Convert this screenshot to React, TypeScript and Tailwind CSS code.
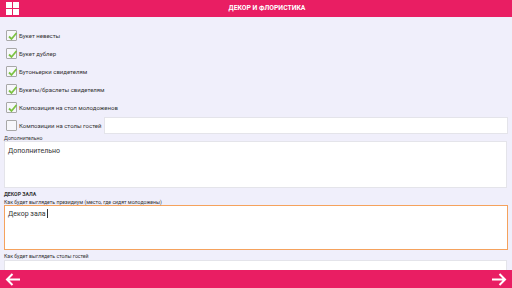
import React from "react";

const CHECKS = [
  { label: "Букет невесты", checked: true },
  { label: "Букет дублер", checked: true },
  { label: "Бутоньерки свидетелям", checked: true },
  { label: "Букеты/браслеты свидетелям", checked: true },
  { label: "Композиция на стол молодоженов", checked: true },
];

function Box({ checked }: { checked: boolean }) {
  return (
    <div className="relative w-[11px] h-[11px] border border-[#a8a8a8] rounded-[1px] bg-[#f7f7fb] shrink-0">
      {checked && (
        <svg viewBox="0 0 11 11" className="absolute left-0 top-0 w-[11px] h-[11px]">
          <path d="M2 5.5 L4.5 8 L9.5 2" fill="none" stroke="#7cc242" strokeWidth="1.8" />
        </svg>
      )}
    </div>
  );
}

function Arrow({ dir }: { dir: "left" | "right" }) {
  const d = dir === "left" ? "M15 6.5 H2 M7.5 1 L2 6.5 L7.5 12" : "M0 6.5 H13 M7.5 1 L13 6.5 L7.5 12";
  return (
    <svg viewBox="0 0 15 13" className="w-[15px] h-[13px]">
      <path d={d} fill="none" stroke="#fff" strokeWidth="2" />
    </svg>
  );
}

export default function App() {
  return (
    <div className="w-[512px] h-[288px] flex flex-col bg-[#f0effb] overflow-hidden font-['Roboto',sans-serif] text-[#333]">
      {/* шапка */}
      <div className="h-[17px] bg-[#e91e63] flex items-center relative shrink-0">
        <div className="grid grid-cols-2 gap-[1px] ml-[6px]">
          <div className="w-[6px] h-[6px] bg-white" />
          <div className="w-[6px] h-[6px] bg-white" />
          <div className="w-[6px] h-[6px] bg-white" />
          <div className="w-[6px] h-[6px] bg-white" />
        </div>
        <div className="flex-1 text-center text-white font-bold text-[6.8px] pl-[22px]">ДЕКОР И ФЛОРИСТИКА</div>
        <div className="w-[19px]" />
      </div>

      <div className="flex-1 overflow-hidden px-[4px] pt-[9px]">
        {CHECKS.map((c) => (
          <div key={c.label} className="h-[18px] flex items-center pl-[2px] gap-[2px]">
            <Box checked={c.checked} />
            <span className="text-[6px] whitespace-nowrap">{c.label}</span>
          </div>
        ))}
        <div className="h-[18px] flex items-center pl-[2px] gap-[2px]">
          <Box checked={false} />
          <span className="text-[6px] w-[83px] whitespace-nowrap">Композиции на столы гостей</span>
          <div className="flex-1 h-[17px] bg-white border border-[#e4e4ea]" />
        </div>

        <div className="text-[5.2px] mt-[1px] leading-[7px]">Дополнительно</div>
        <div className="h-[47px] bg-white border border-[#e4e4ea] mt-[-1px] mr-[1px] px-[3px] pt-[4px] text-[7px]">
          Дополнительно
        </div>

        <div className="text-[5.2px] font-bold mt-[3px] leading-[7px]">ДЕКОР ЗАЛА</div>
        <div className="text-[5.2px] leading-[7px] mt-[1px]">Как будет выглядеть президиум (место, где сидят молодожены)</div>
        <div className="h-[45px] bg-white border border-[#f5a25d] mt-[-1px] px-[3px] pt-[3px] text-[7px] flex items-start">
          <span>Декор зала</span>
          <span className="w-px h-[9px] bg-[#333] ml-[1px]" />
        </div>

        <div className="text-[5.2px] leading-[7px] mt-[3px]">Как будет выглядеть столы гостей</div>
        <div className="h-[20px] bg-white border border-[#e4e4ea] mr-[1px]" />
      </div>

      {/* нижняя панель */}
      <div className="h-[18px] bg-[#e91e63] flex items-center justify-between px-[5px] shrink-0">
        <Arrow dir="left" />
        <Arrow dir="right" />
      </div>
    </div>
  );
}
